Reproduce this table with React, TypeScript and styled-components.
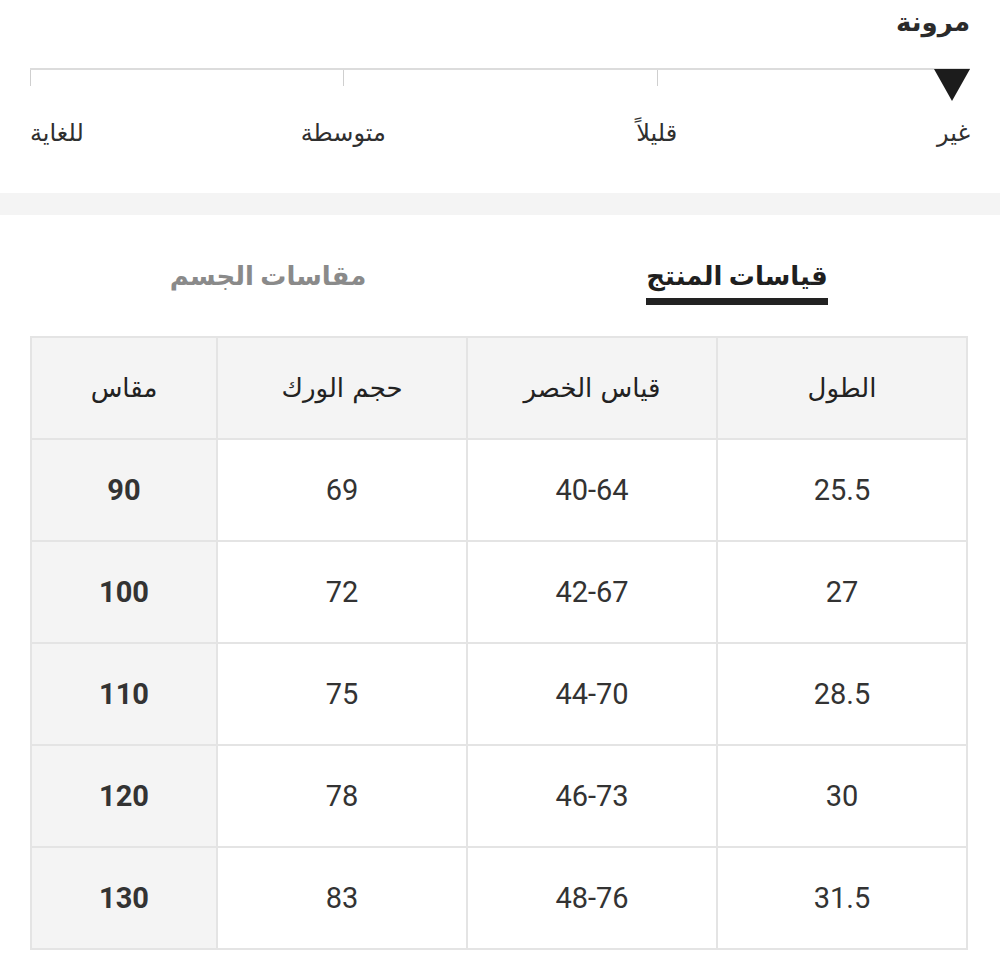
import React from "react";
import styled, { createGlobalStyle } from "styled-components";

const GlobalStyle = createGlobalStyle`
  html, body {
    margin: 0;
    padding: 0;
    background: #ffffff;
  }
  body {
    font-family: Roboto, "Noto Sans", "DejaVu Sans", sans-serif;
    color: #222;
  }
`;

const Page = styled.div`
  direction: rtl;
  width: 1000px;
  height: 961px;
  overflow: hidden;
  background: #fff;
`;

const StretchSection = styled.section`
  padding: 6px 30px 0 30px;
  height: 193px;
  box-sizing: border-box;
`;

const SectionTitle = styled.div`
  font-size: 26px;
  font-weight: 600;
  color: #2b2b2b;
  line-height: 32px;
  height: 34px;
`;

const Scale = styled.div`
  position: relative;
  margin: 28px 0 0 0;
  display: grid;
  grid-template-columns: repeat(3, 1fr);
  border-top: 2px solid #dcdcdc;
  height: 16px;
`;

const Segment = styled.div`
  border-left: 1px solid #cfcfcf;
`;

const Marker = styled.div`
  position: absolute;
  right: 0;
  top: -1px;
  width: 0;
  height: 0;
  border-left: 18px solid transparent;
  border-right: 18px solid transparent;
  border-top: 32px solid #1c1c1c;
`;

const Labels = styled.div`
  display: grid;
  grid-template-columns: repeat(6, 1fr);
  margin-top: 32px;
  font-size: 24px;
  color: #2f2f2f;
  line-height: 30px;
`;

const Label = styled.div<{ $col: string; $align: string }>`
  grid-column: ${(p) => p.$col};
  text-align: ${(p) => p.$align};
  white-space: nowrap;
`;

const Band = styled.div`
  height: 22px;
  background: #f4f4f4;
`;

const Tabs = styled.div`
  display: grid;
  grid-template-columns: 1fr 1fr;
  padding: 46px 0 0 0;
  height: 121px;
  box-sizing: border-box;
`;

const Tab = styled.div<{ $active?: boolean }>`
  justify-self: center;
  font-size: 26px;
  font-weight: 700;
  line-height: 30px;
  color: ${(p) => (p.$active ? "#1f1f1f" : "#8a8a8a")};
  padding-bottom: 5px;
  border-bottom: 7px solid ${(p) => (p.$active ? "#222" : "transparent")};
  height: 32px;
  margin-right: ${(p) => (p.$active ? "26px" : "0")};
  margin-left: ${(p) => (p.$active ? "0" : "36px")};
`;

const TableWrap = styled.div`
  padding: 0 32px 0 32px;
`;

const Table = styled.table`
  width: 936px;
  border-collapse: collapse;
  table-layout: fixed;
  border: 2px solid #e4e4e4;
`;

const Cell = styled.td<{ $head?: boolean; $size?: boolean }>`
  border: 2px solid #e4e4e4;
  height: 100px;
  padding: 0;
  text-align: center;
  vertical-align: middle;
  background: ${(p) => (p.$head || p.$size ? "#f4f4f4" : "#fff")};
  font-size: ${(p) => (p.$head ? "26px" : "29px")};
  color: ${(p) => (p.$head ? "#222" : "#333")};
  font-family: ${(p) =>
    p.$head
      ? `"DejaVu Sans", "Noto Sans", sans-serif`
      : `Roboto, "Liberation Sans", sans-serif`};
  font-weight: ${(p) => (p.$size ? 700 : 400)};
`;

const heads = ["الطول", "قياس الخصر", "حجم الورك", "مقاس"];
const rows = [
  ["25.5", "40-64", "69", "90"],
  ["27", "42-67", "72", "100"],
  ["28.5", "44-70", "75", "110"],
  ["30", "46-73", "78", "120"],
  ["31.5", "48-76", "83", "130"],
];

export default function App() {
  return (
    <Page>
      <GlobalStyle />
      <StretchSection>
        <SectionTitle>مرونة</SectionTitle>
        <Scale>
          <Segment />
          <Segment />
          <Segment />
          <Marker />
        </Scale>
        <Labels>
          <Label $col="1 / 2" $align="right">غير</Label>
          <Label $col="2 / 4" $align="center">قليلاً</Label>
          <Label $col="4 / 6" $align="center">متوسطة</Label>
          <Label $col="6 / 7" $align="left">للغاية</Label>
        </Labels>
      </StretchSection>
      <Band />
      <Tabs>
        <Tab $active>قياسات المنتج</Tab>
        <Tab>مقاسات الجسم</Tab>
      </Tabs>
      <TableWrap>
        <Table>
          <colgroup>
            <col style={{ width: 250 }} />
            <col style={{ width: 250 }} />
            <col style={{ width: 250 }} />
            <col style={{ width: 186 }} />
          </colgroup>
          <tbody>
            <tr>
              {heads.map((h) => (
                <Cell key={h} $head>
                  {h}
                </Cell>
              ))}
            </tr>
            {rows.map((r) => (
              <tr key={r[3]}>
                {r.map((v, i) => (
                  <Cell key={i} $size={i === 3}>
                    {v}
                  </Cell>
                ))}
              </tr>
            ))}
          </tbody>
        </Table>
      </TableWrap>
    </Page>
  );
}
